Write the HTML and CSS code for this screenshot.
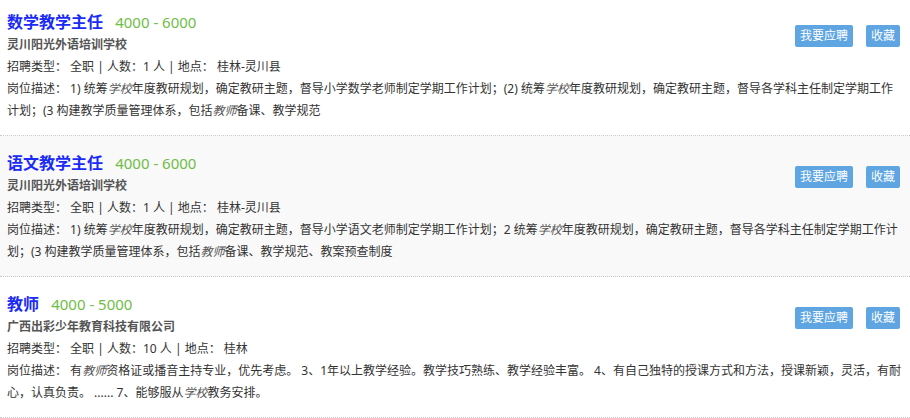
FILE: index.html
```html
<!DOCTYPE html>
<html lang="zh-CN">
  <head>
    <meta charset="UTF-8" />
    <meta name="viewport" content="width=device-width, initial-scale=1.0" />
    <title>招聘信息</title>
    <link rel="stylesheet" href="styles.css">
  </head>
  <body>
    <ul class="job-list">
      <li class="job">
        <div class="job-head">
          <div class="job-main">
            <h3 class="job-title">数学教学主任 <span class="salary">4000 - 6000</span></h3>
            <div class="company">灵川阳光外语培训学校</div>
          </div>
          <div class="actions">
            <a class="btn" href="#">我要应聘</a>
            <a class="btn" href="#">收藏</a>
          </div>
        </div>
        <p class="meta">招聘类型： 全职 | 人数：1 人 | 地点： 桂林-灵川县</p>
        <p class="desc">岗位描述： 1) 统筹<em>学校</em>年度教研规划，确定教研主题，督导小学数学老师制定学期工作计划；(2) 统筹<em>学校</em>年度教研规划，确定教研主题，督导各学科主任制定学期工作计划；(3 构建教学质量管理体系，包括<em>教师</em>备课、教学规范</p>
      </li>
      <li class="job">
        <div class="job-head">
          <div class="job-main">
            <h3 class="job-title">语文教学主任 <span class="salary">4000 - 6000</span></h3>
            <div class="company">灵川阳光外语培训学校</div>
          </div>
          <div class="actions">
            <a class="btn" href="#">我要应聘</a>
            <a class="btn" href="#">收藏</a>
          </div>
        </div>
        <p class="meta">招聘类型： 全职 | 人数：1 人 | 地点： 桂林-灵川县</p>
        <p class="desc">岗位描述： 1) 统筹<em>学校</em>年度教研规划，确定教研主题，督导小学语文老师制定学期工作计划；2 统筹<em>学校</em>年度教研规划，确定教研主题，督导各学科主任制定学期工作计划；(3 构建教学质量管理体系，包括<em>教师</em>备课、教学规范、教案预查制度</p>
      </li>
      <li class="job">
        <div class="job-head">
          <div class="job-main">
            <h3 class="job-title">教师 <span class="salary">4000 - 5000</span></h3>
            <div class="company">广西出彩少年教育科技有限公司</div>
          </div>
          <div class="actions">
            <a class="btn" href="#">我要应聘</a>
            <a class="btn" href="#">收藏</a>
          </div>
        </div>
        <p class="meta">招聘类型： 全职 | 人数：10 人 | 地点： 桂林</p>
        <p class="desc">岗位描述： 有<em>教师</em>资格证或播音主持专业，优先考虑。 3、1年以上教学经验。教学技巧熟练、教学经验丰富。 4、有自己独特的授课方式和方法，授课新颖，灵活，有耐心，认真负责。 ...... 7、能够服从<em>学校</em>教务安排。</p>
      </li>
    </ul>
  </body>
</html>
```

FILE: styles.css
```css
body {
  margin: 0;
  font-family: "Noto Sans", "Noto Sans CJK SC", sans-serif;
  font-size: 12px;
  color: #333;
  background-color: #fff;
}
.job-list {
  list-style: none;
  margin: -5px 0 0;
  padding: 0;
}
.job {
  padding: 15px 6px 13px 7px;
  border-bottom: 1px dotted #c8c8c8;
}
.job:nth-child(even) {
  background-color: #f9f9f9;
}
.job-head {
  display: flex;
  justify-content: space-between;
  align-items: flex-start;
}
.job-title {
  margin: 0;
  font-size: 16px;
  line-height: 24px;
  font-weight: bold;
  color: #1a2af7;
}
.salary {
  margin-left: 8px;
  font-size: 15px;
  font-weight: normal;
  color: #6fbd45;
}
.company {
  line-height: 22px;
  font-weight: bold;
  color: #555;
}
.actions {
  display: flex;
  gap: 13px;
  margin: 15px 4px 0 0;
}
.btn {
  display: block;
  padding: 0 5px;
  height: 22px;
  line-height: 22px;
  border-radius: 2px;
  background-color: #5ea5e2;
  color: #fff;
  text-decoration: none;
}
.meta,
.desc {
  margin: 0;
  line-height: 22px;
  text-spacing-trim: space-all;
}
.desc em {
  color: #555;
}
```
